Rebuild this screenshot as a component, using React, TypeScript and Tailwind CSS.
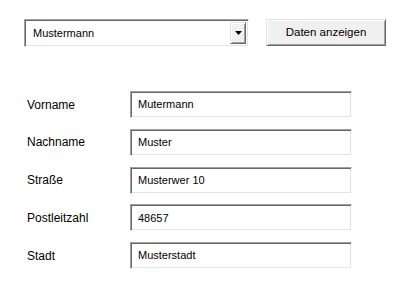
const fields = [
	{ label: "Vorname", value: "Mutermann" },
	{ label: "Nachname", value: "Muster" },
	{ label: "Straße", value: "Musterwer 10" },
	{ label: "Postleitzahl", value: "48657" },
	{ label: "Stadt", value: "Musterstadt" },
];

const sunken =
	"border border-t-[#a0a0a0] border-l-[#a0a0a0] border-r-white border-b-white shadow-[inset_1px_1px_0_#696969,inset_-1px_-1px_0_#e3e3e3]";

const raised =
	"border border-t-[#e3e3e3] border-l-[#e3e3e3] border-r-[#696969] border-b-[#696969] shadow-[inset_1px_1px_0_#ffffff,inset_-1px_-1px_0_#a0a0a0]";

export default function App() {
	return (
		<div className="w-[408px] h-[302px] bg-white font-['Liberation_Sans',Arial,sans-serif] text-black">
			<div className="flex items-start pt-[19px] pl-[24px] gap-[17px]">
				<div className={`flex w-[225px] h-[28px] bg-white p-[2px] ${sunken}`}>
					<div className="flex-1 flex items-center pl-[6px] text-[11px]">
						Mustermann
					</div>
					<div
						className={`w-[16px] h-full bg-[#f0f0f0] flex items-center justify-center ${raised}`}
					>
						<svg width="7" height="4" viewBox="0 0 7 4">
							<path d="M0 0h7L3.5 4z" fill="#000" />
						</svg>
					</div>
				</div>
				<button
					type="button"
					className={`w-[120px] h-[27px] bg-[#f0f0f0] text-[11.5px] flex items-center justify-center ${raised}`}
				>
					Daten anzeigen
				</button>
			</div>
			<div className="grid grid-cols-[103px_222px] gap-y-[10.75px] pl-[27px] mt-[44px]">
				{fields.map((f) => (
					<div key={f.label} className="contents">
						<div className="flex items-center text-[12px] h-[27px]">
							{f.label}
						</div>
						<div
							className={`h-[27px] flex items-center pl-[7px] text-[11px] bg-white ${sunken}`}
						>
							{f.value}
						</div>
					</div>
				))}
			</div>
		</div>
	);
}
